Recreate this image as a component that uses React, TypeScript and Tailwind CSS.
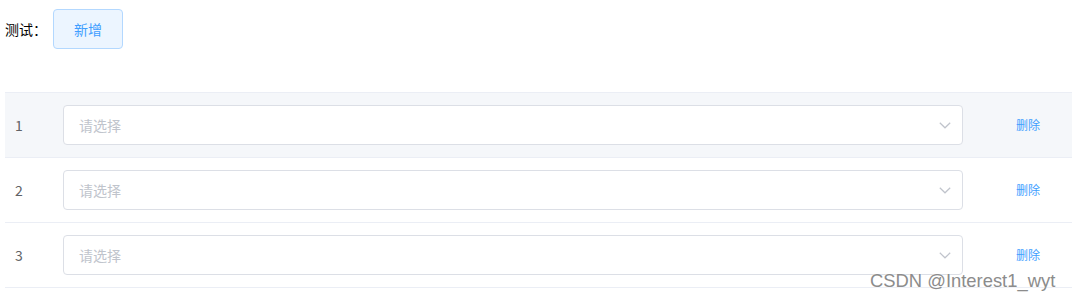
import React from "react";

const font = { fontFamily: '"Noto Sans CJK SC", "Liberation Sans", sans-serif' };

function Row({ n, striped }: { n: number; striped?: boolean }) {
  return (
    <div
      className={`flex h-[65px] items-center border-b border-[#ebeef5] ${striped ? "bg-[#f5f7fa]" : "bg-white"}`}
    >
      <div className="w-[48px] pl-[10px] text-[14px] text-[#606266]">{n}</div>
      <div className="w-[920px] px-[10px]">
        <div className="flex h-[40px] w-[900px] items-center justify-between rounded-[4px] border border-[#dcdfe6] bg-white pl-[15px] pr-[11px]">
          <span className="text-[14px] text-[#c0c4cc]">请选择</span>
          <svg width="12" height="7" viewBox="0 0 12 7" fill="none">
            <path d="M0.8 0.8 L6 5.8 L11.2 0.8" stroke="#c0c4cc" strokeWidth="1.2" />
          </svg>
        </div>
      </div>
      <div className="flex-1 pl-[43px] text-[12px] text-[#409eff]">删除</div>
    </div>
  );
}

export default function App() {
  return (
    <div className="relative h-[297px] w-[1072px] overflow-hidden bg-white" style={font}>
      <div className="flex items-center pl-[5px] pt-[9px]">
        <span className="text-[14px] text-black">测试：</span>
        <button className="ml-[6px] h-[40px] w-[70px] rounded-[4px] border border-[#b3d8ff] bg-[#ecf5ff] text-[14px] text-[#409eff]">
          新增
        </button>
      </div>
      <div className="ml-[5px] mt-[43px] border-t border-[#ebeef5]">
        <Row n={1} striped />
        <Row n={2} />
        <Row n={3} />
      </div>
      <div
        className="absolute left-[870px] top-[267px] text-[18.4px] text-[#8c8c8c]"
        style={{ fontFamily: '"Liberation Sans", Arial, sans-serif', textShadow: "0 0 2px #fff" }}
      >
        CSDN @Interest1_wyt
      </div>
    </div>
  );
}
